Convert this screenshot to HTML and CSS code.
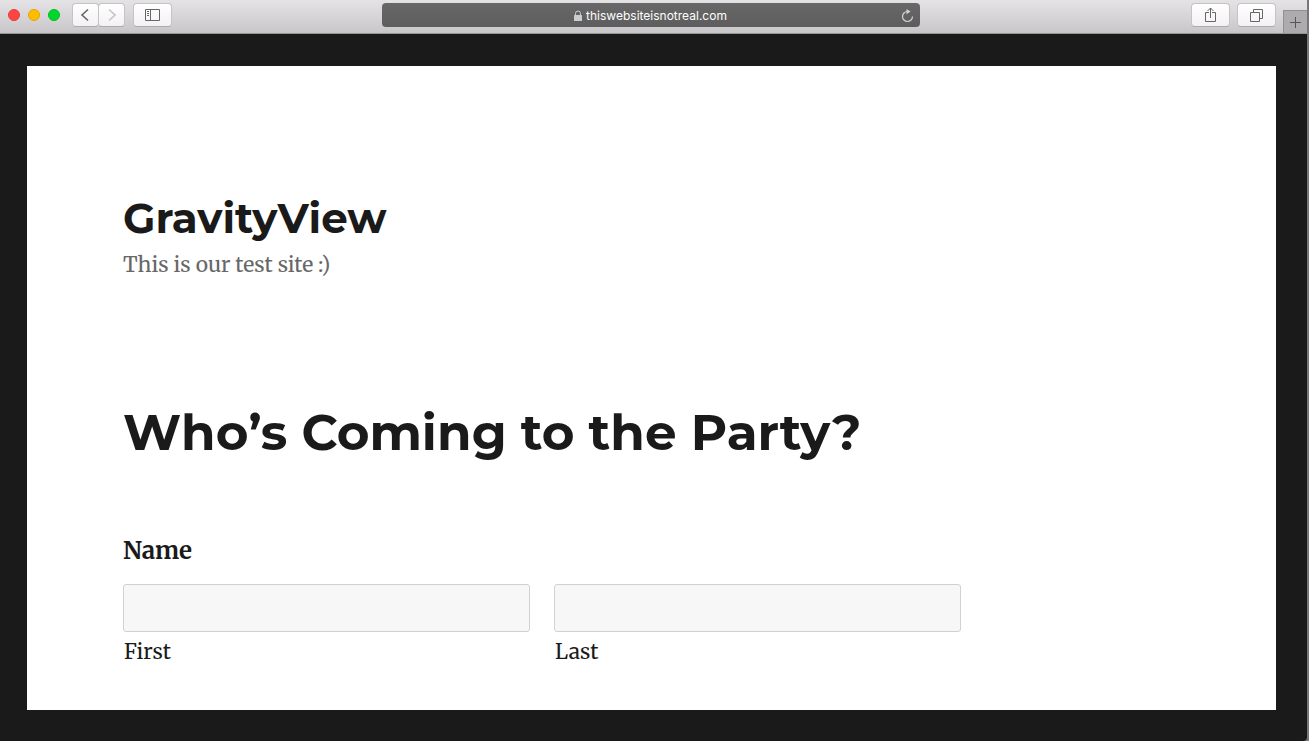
FILE: index.html
```html
<!DOCTYPE html>
<html lang="en">
<head>
<meta charset="utf-8">
<title>GravityView</title>
<link rel="stylesheet" href="styles.css">
</head>
<body>
<div class="window">
  <header class="toolbar">
    <div class="side">
      <div class="lights">
        <button class="light red" aria-label="Close"></button>
        <button class="light yellow" aria-label="Minimize"></button>
        <button class="light green" aria-label="Zoom"></button>
      </div>
      <div class="nav">
        <button class="tool" aria-label="Back"><svg width="11" height="14" viewBox="0 0 11 14"><path d="M8 1.500 2 7l6 5.500" stroke-width="1.600"/></svg></button>
        <button class="tool" aria-label="Forward" disabled><svg width="10" height="14" viewBox="0 0 10 14"><path d="M2 1.500 8 7l-6 5.500" stroke-width="1.600"/></svg></button>
      </div>
      <button class="tool wide" aria-label="Sidebar"><svg width="15" height="12" viewBox="0 0 15 12"><path d="M.5.5h14v11H.5zM5.500.5v11M2 2.500h2M2 4.500h2M2 6.500h2"/></svg></button>
    </div>
    <div class="address">
      <span class="site"><svg width="8" height="11" viewBox="0 0 8 11"><rect y="5" width="8" height="6" rx=".5" fill="#ccc" stroke="none"/><path d="M1.500 5V3.500a2.500 2.500 0 0 1 5 0V5" stroke="#ccc"/></svg>thiswebsiteisnotreal.com</span>
      <button class="reload" aria-label="Reload"><svg width="13" height="14" viewBox="0 0 13 14"><path d="M6.500 2.500A5 5 0 1 0 11.500 7.500" stroke="#d2d2d2" stroke-width="1.200"/><path d="m5.500 0 4 2.500-4 2.800z" fill="#d2d2d2" stroke="none"/></svg></button>
    </div>
    <div class="side end">
      <button class="tool wide" aria-label="Share"><svg width="11" height="16" viewBox="0 0 11 16"><path d="M4 5.500H.5v9h10v-9H7M5.500 11V1M2.500 4l3-3 3 3"/></svg></button>
      <button class="tool wide" aria-label="Show tabs"><svg width="13" height="13" viewBox="0 0 13 13"><path d="M.5 3.500h9v9h-9zM3.500 3.500v-3h9v9h-3"/></svg></button>
      <button class="newtab" aria-label="New tab"><svg width="11" height="11" viewBox="0 0 11 11"><path d="M5.500 0v11M0 5.500h11"/></svg></button>
    </div>
  </header>
  <main class="page">
    <div class="paper">
      <p class="title">GravityView</p>
      <p class="tagline">This is our test site :)</p>
      <h1 class="heading">Who’s Coming to the Party?</h1>
      <form>
        <fieldset class="group">
          <legend class="legend">Name</legend>
          <div class="fields">
            <div class="field"><input class="input" id="first" type="text"><label class="label" for="first">First</label></div>
            <div class="field"><input class="input" id="last" type="text"><label class="label" for="last">Last</label></div>
          </div>
        </fieldset>
      </form>
    </div>
  </main>
</div>
</body>
</html>
```
FILE: styles.css
```css
* { box-sizing: border-box; }
body { margin: 0; background: #777; }
button { padding: 0; border: 0; }
svg { display: block; fill: none; stroke: #666; }
.window {
  display: flex;
  flex-direction: column;
  min-height: 100vh;
  margin-right: 2px;
  background: #1a1a1a;
  border-bottom-right-radius: 4px;
}
.toolbar {
  display: grid;
  grid-template-columns: 1fr 544px 1fr;
  height: 34px;
  padding-top: 3px;
  background: linear-gradient(#e6e3e6, #c9c6c9);
  border-bottom: 1px solid #919791;
}
.side { display: flex; align-items: flex-start; gap: 8px; padding-left: 8px; }
.end { justify-content: flex-end; gap: 7px; padding-left: 0; }
.lights { display: flex; gap: 8px; margin: 6px 4px 0 0; }
.light { width: 12px; height: 12px; border-radius: 50%; }
.red { background: #ff4543; border: 1px solid #e33c39; }
.yellow { background: #ffbd00; border: 1px solid #e5a400; }
.green { background: #00d72d; border: 1px solid #00bd24; }
.nav { display: flex; }
.tool {
  display: flex;
  align-items: center;
  justify-content: center;
  width: 27px;
  height: 24px;
  border: 1px solid #c6c3c6;
  border-bottom-color: #aeabae;
  border-radius: 4px;
  background: linear-gradient(#fff, #f2f2f2);
}
.tool:disabled svg { stroke: #c4c4c4; }
.nav .tool + .tool { margin-left: -1px; }
.wide { width: 39px; }
.address {
  display: grid;
  grid-template-columns: 24px 1fr 24px;
  align-items: center;
  height: 24px;
  margin-right: 6px;
  padding-top: 1px;
  border-radius: 4px;
  background: linear-gradient(#686868, #5d5d5d);
  color: #fff;
  font: 12px/23px Inter, sans-serif;
}
.site { display: flex; grid-column: 2; align-items: center; justify-content: center; gap: 4px; }
.reload { display: grid; place-items: center; background: none; }
.newtab {
  display: flex;
  align-self: flex-end;
  align-items: center;
  justify-content: center;
  width: 24px;
  height: 23px;
  border: solid #929092;
  border-width: 1px 0 0 1px;
  background: #aeabae;
}
.newtab svg { stroke: #555; }
.page { display: flex; flex: 1; padding: 32px 31px 31px 27px; }
.paper {
  flex: 1;
  padding: 124px 96px 40px;
  background: #fff;
  color: #1a1a1a;
  font-family: Merriweather, "DejaVu Serif Condensed", "DejaVu Serif", serif;
}
.title, .heading { margin: 0; font-family: Montserrat, Inter, sans-serif; font-weight: 700; }
.title { font-size: 42px; line-height: 56px; }
.tagline { margin: 5px 0 0; color: #686868; font-size: 21px; line-height: 28px; }
.heading { margin-top: 119px; font-size: 50px; line-height: 70px; }
.group { max-width: 838px; margin: 67px 0 0; padding: 0; border: 0; }
.legend { padding: 0; font-size: 24px; font-weight: 700; line-height: 32px; }
.fields { display: grid; grid-template-columns: 1fr 1fr; gap: 24px; padding-top: 17px; }
.input {
  display: block;
  width: 100%;
  height: 48px;
  padding: 0 12px;
  border: 1px solid #d1d1d1;
  border-radius: 3px;
  background: #f7f7f7;
  font: inherit;
}
.label { display: block; padding: 6px 0 0 1px; font-size: 21px; line-height: 28px; }
```
